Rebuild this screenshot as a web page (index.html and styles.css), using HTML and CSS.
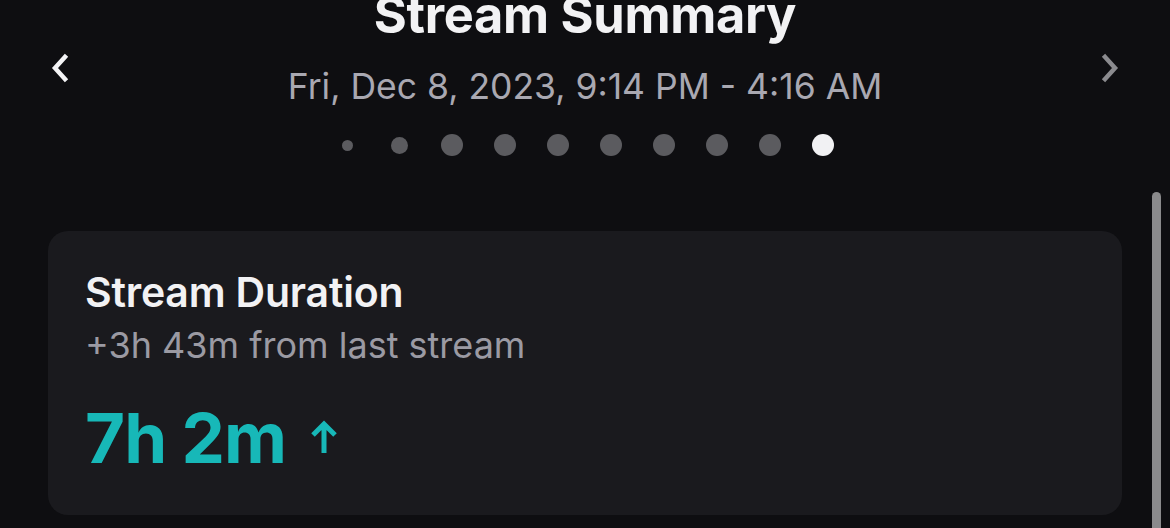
FILE: index.html
```html
<!DOCTYPE html>
<html lang="en">

<head>
    <meta charset="UTF-8">
    <meta name="viewport" content="width=device-width, initial-scale=1.0">
    <title>Stream Summary</title>
    <link rel="stylesheet" href="styles.css">
</head>

<body>

    <div class="header">
        <button class="nav nav-prev" aria-label="Previous stream">
            <svg width="20" height="32" viewBox="0 0 20 32">
                <path d="M15 5 L5 16 L15 27" fill="none" stroke="currentColor" stroke-width="4.5" stroke-linecap="square" stroke-linejoin="miter"/>
            </svg>
        </button>

        <div class="summary">
            <h1>Stream Summary</h1>
            <p class="date">Fri, Dec 8, 2023, 9:14 PM - 4:16 AM</p>
            <div class="dots">
                <span class="dot dot-xs"></span>
                <span class="dot dot-sm"></span>
                <span class="dot"></span>
                <span class="dot"></span>
                <span class="dot"></span>
                <span class="dot"></span>
                <span class="dot"></span>
                <span class="dot"></span>
                <span class="dot"></span>
                <span class="dot active"></span>
            </div>
        </div>

        <button class="nav nav-next" aria-label="Next stream">
            <svg width="20" height="32" viewBox="0 0 20 32">
                <path d="M5 5 L15 16 L5 27" fill="none" stroke="currentColor" stroke-width="4.5" stroke-linecap="square" stroke-linejoin="miter"/>
            </svg>
        </button>
    </div>

    <div class="card">
        <h2>Stream Duration</h2>
        <p class="change">+3h 43m from last stream</p>
        <div class="value">
            7h 2m
            <svg class="arrow" width="30" height="36" viewBox="0 0 30 36">
                <path d="M15 34 V5 M4 16 L15 5 L26 16" fill="none" stroke="currentColor" stroke-width="5"/>
            </svg>
        </div>
    </div>

    <div class="scrollbar"></div>

</body>

</html>
```

FILE: styles.css
```css
body {
    font-family: Inter, "Noto Sans", sans-serif;
    background-color: #0e0e11;
    color: #f2f2f4;
    margin: 0;
    height: 528px;
    overflow: hidden;
    position: relative;
}

.header {
    display: flex;
    justify-content: space-between;
    align-items: flex-start;
    padding: 0 50px;
}

.nav {
    background: none;
    border: none;
    padding: 0;
    margin-top: 52px;
    width: 20px;
    height: 32px;
    cursor: pointer;
}

.nav-prev {
    color: #f4f4f6;
}

.nav-next {
    color: #8b8b8f;
}

.summary {
    display: flex;
    flex-direction: column;
    align-items: center;
}

h1 {
    font-size: 50.5px;
    font-weight: 700;
    line-height: 60px;
    margin: -15px 0 0;
    letter-spacing: -0.3px;
}

.date {
    font-size: 35.5px;
    line-height: 44px;
    color: #a9a8b1;
    margin: 20px 0 0;
}

.dots {
    display: flex;
    align-items: center;
    gap: 31px;
    height: 22px;
    margin-top: 25px;
}

.dot {
    width: 22px;
    height: 22px;
    border-radius: 50%;
    background-color: #5b5b5f;
}

.dot-xs {
    width: 11px;
    height: 11px;
    margin: 0 5px;
}

.dot-sm {
    width: 17px;
    height: 17px;
    margin: 0 2px;
}

.active {
    background-color: #f1f1f3;
}

.card {
    background-color: #1a1a1e;
    border-radius: 20px;
    margin: 75px 48px 0;
    padding: 37px 37px 0;
    height: 247px;
}

h2 {
    font-size: 41px;
    font-weight: 600;
    line-height: 48px;
    margin: 0;
    letter-spacing: -0.2px;
}

.change {
    font-size: 36px;
    line-height: 44px;
    color: #9b9aa3;
    margin: 7px 0 0;
}

.value {
    font-size: 69px;
    font-weight: 700;
    line-height: 80px;
    color: #17b8b8;
    margin-top: 31px;
    letter-spacing: -1px;
}

.arrow {
    margin-left: 8px;
    vertical-align: 8px;
}

.scrollbar {
    position: absolute;
    top: 192px;
    right: 9px;
    width: 9px;
    height: 360px;
    border-radius: 5px;
    background-color: #8a8a8c;
}
```
